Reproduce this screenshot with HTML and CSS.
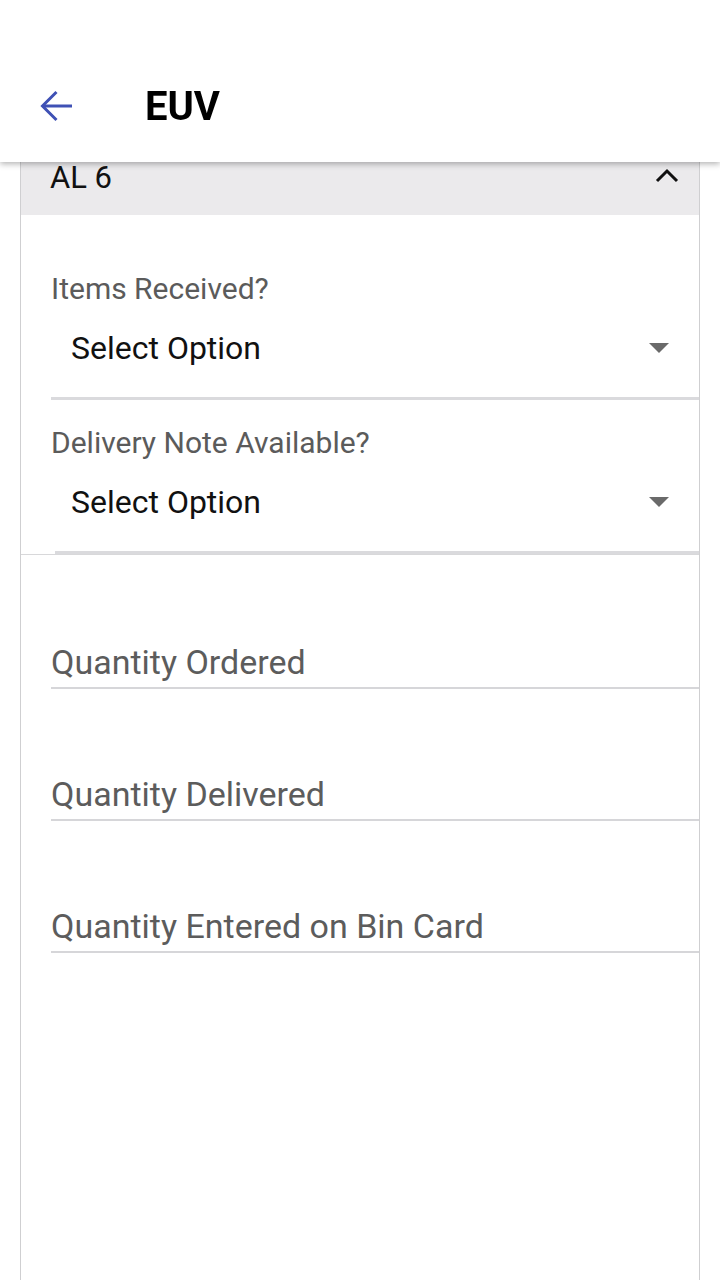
FILE: index.html
```html
<!DOCTYPE html>
<html lang="en">
<head>
<meta charset="utf-8">
<title>EUV</title>
<link rel="stylesheet" href="styles.css">
</head>
<body>
<header class="appbar">
  <button class="back" aria-label="Back">
    <svg width="32" height="32" viewBox="0 0 32 32" fill="none" stroke="#3f51b5" stroke-width="3" stroke-linecap="butt" stroke-linejoin="miter">
      <path d="M32 16H3"/>
      <path d="M16.5 2L2.5 16l14 14"/>
    </svg>
  </button>
  <h1 class="title">EUV</h1>
</header>
<main class="content">
  <section class="card">
    <div class="card-head">
      <span class="card-title">AL 6</span>
      <svg class="chev" width="24" height="16" viewBox="0 0 24 16" fill="none" stroke="#111" stroke-width="3">
        <path d="M2 13L12 3l10 10"/>
      </svg>
    </div>
    <div class="selects">
      <div class="field">
        <label class="label">Items Received?</label>
        <div class="select"><span>Select Option</span><span class="caret"></span></div>
        <div class="underline"></div>
      </div>
      <div class="field field-2">
        <label class="label">Delivery Note Available?</label>
        <div class="select"><span>Select Option</span><span class="caret"></span></div>
        <div class="underline"></div>
      </div>
    </div>
    <div class="inputs">
      <div class="input">Quantity Ordered</div>
      <div class="input">Quantity Delivered</div>
      <div class="input">Quantity Entered on Bin Card</div>
    </div>
  </section>
</main>
</body>
</html>
```
FILE: styles.css
```css
* { box-sizing: border-box; }
html, body { margin: 0; padding: 0; }
body {
  background: #fff;
  font-family: Roboto, "Noto Sans", "Liberation Sans", sans-serif;
  width: 720px;
  height: 1280px;
  overflow: hidden;
}
.appbar {
  position: fixed;
  top: 0; left: 0;
  width: 720px;
  height: 162px;
  padding-top: 50px;
  background: #fff;
  display: flex;
  align-items: center;
  box-shadow: 0 2px 6px rgba(0,0,0,0.30);
  z-index: 10;
}
.back {
  border: 0;
  background: none;
  padding: 0;
  margin-left: 40px;
  width: 32px;
  height: 32px;
  display: flex;
}
.title {
  margin: 0 0 0 73px;
  font-size: 40px;
  line-height: 40px;
  font-weight: 700;
  color: #000;
  padding-top: 2px;
}
.content {
  padding-top: 155px;
  padding-left: 20px;
  padding-right: 20px;
}
.card {
  border-left: 1px solid #cfcfd1;
  border-right: 1px solid #cfcfd1;
  min-height: 1125px;
}
.card-head {
  background: #ebeaec;
  height: 60px;
  padding: 5px 20px 0 29px;
  display: flex;
  justify-content: space-between;
  align-items: flex-start;
}
.card-title {
  font-size: 31px;
  line-height: 36px;
  color: #111;
}
.chev { margin-top: 8px; }
.selects {
  padding-top: 31px;
  border-bottom: 1px solid #d8d8da;
}
.field {
  padding-top: 25px;
  padding-left: 30px;
}
.field-2 .underline { margin-left: 4px; }
.label {
  display: block;
  font-size: 30px;
  line-height: 35px;
  color: #5b5b5b;
  margin-bottom: 12px;
}
.select {
  height: 60px;
  line-height: 60px;
  font-size: 32px;
  color: #111;
  padding-left: 20px;
  padding-right: 30px;
  display: flex;
  justify-content: space-between;
  align-items: center;
}
.caret {
  width: 0; height: 0;
  border-left: 10px solid transparent;
  border-right: 10px solid transparent;
  border-top: 10px solid #6a6a6a;
}
.underline {
  margin-top: 19px;
  height: 3px;
  background: #dadadd;
}
.inputs {
  padding-top: 2px;
  padding-left: 30px;
}
.input {
  margin-top: 85px;
  font-size: 34px;
  line-height: 40px;
  color: #5c5c5c;
  padding-bottom: 5px;
  border-bottom: 2px solid #d6d6d9;
}
```
